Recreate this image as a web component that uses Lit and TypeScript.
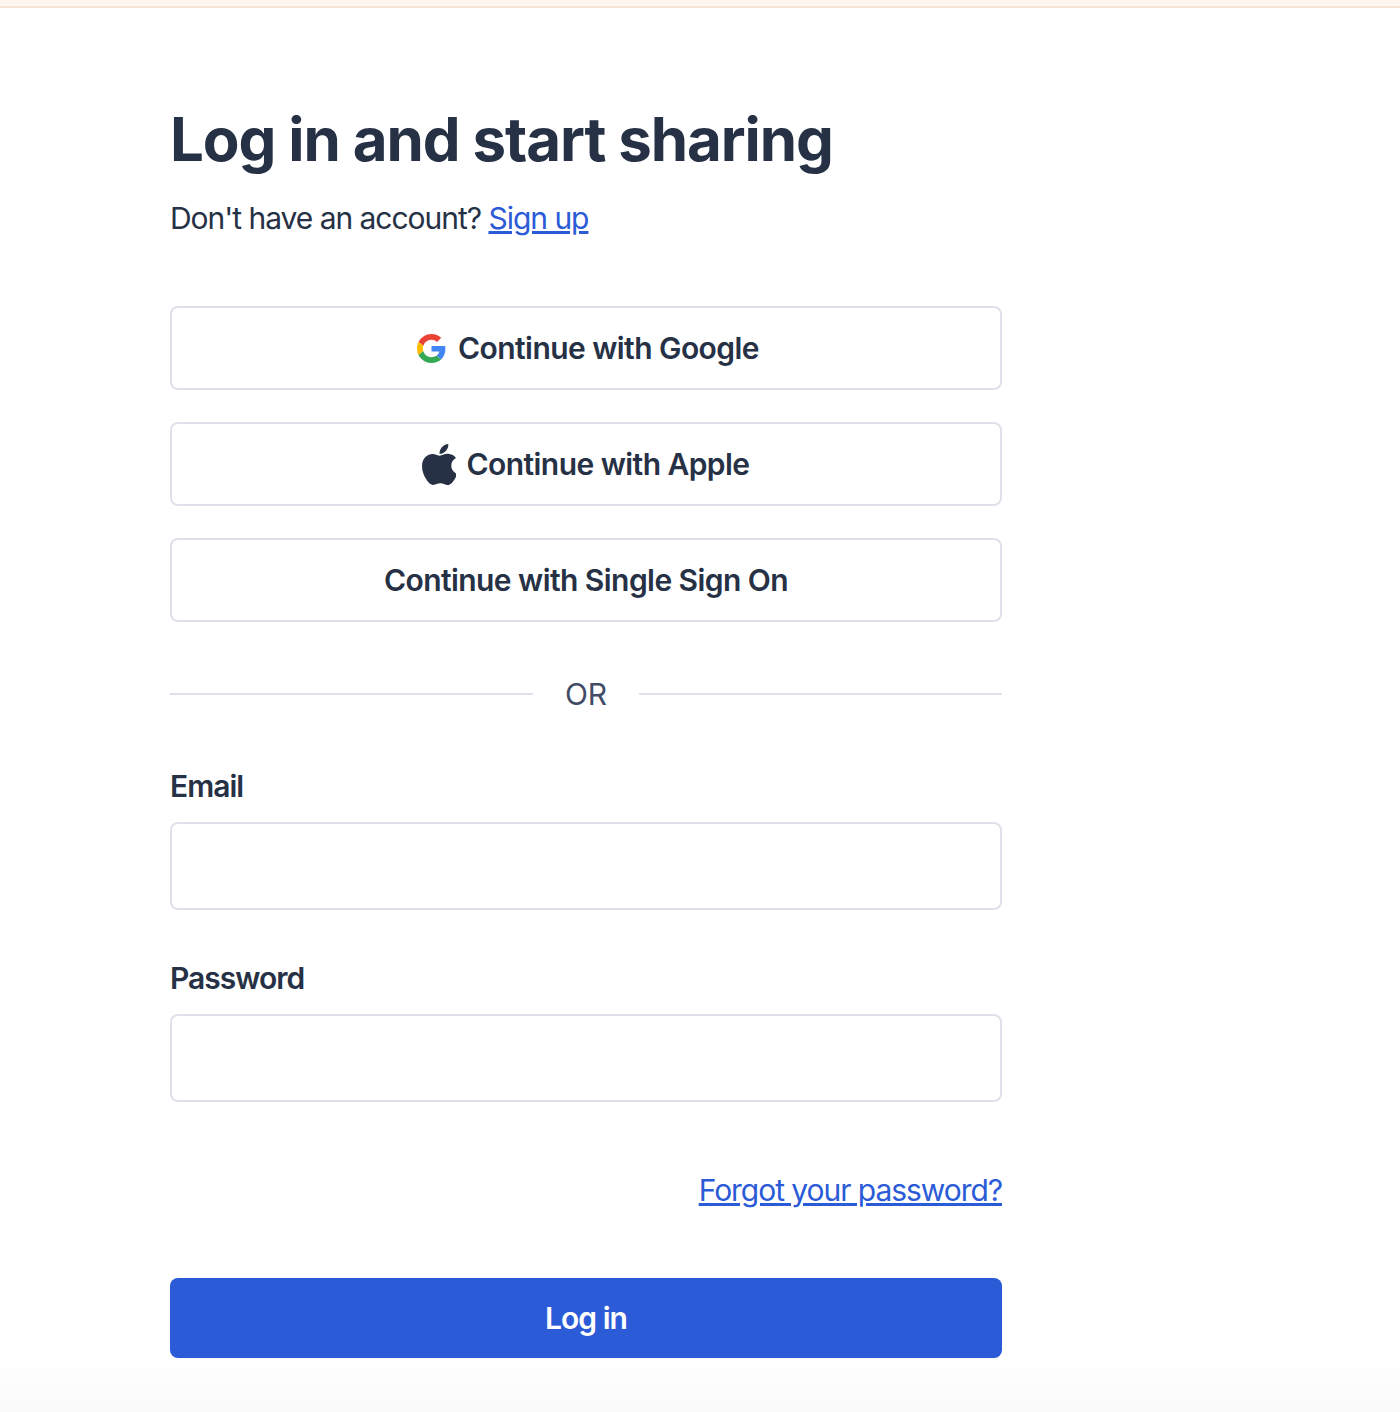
import { LitElement, html, css } from 'lit';
import { customElement } from 'lit/decorators.js';

@customElement('app-root')
export class AppRoot extends LitElement {
  render() {
    return html`
      <div class="top-bar"></div>
      <main class="form">
        <h1 class="title">Log in and start sharing</h1>
        <p class="subtitle">Don't have an account? <a href="#">Sign up</a></p>
        <div class="providers">
          <button class="provider provider--google">
            <svg width="29" height="29" viewBox="0 0 48 48">
              <path fill="#EA4335" d="M24 9.5c3.5 0 6.7 1.2 9.2 3.6l6.9-6.9C35.900 2.400 30.500 0 24 0 14.600 0 6.500 5.400 2.600 13.200l8 6.200C12.400 13.700 17.700 9.500 24 9.500z"/>
              <path fill="#4285F4" d="M47 24.500c0-1.600-.1-3.100-.4-4.500H24v9h12.900c-.6 3-2.200 5.500-4.700 7.200l7.700 6c4.500-4.200 7.100-10.300 7.100-17.700z"/>
              <path fill="#FBBC05" d="M10.500 28.600c-.5-1.400-.8-3-.8-4.600s.3-3.200.8-4.600l-8-6.200C.9 16.500 0 20.100 0 24s.9 7.500 2.600 10.800l7.900-6.200z"/>
              <path fill="#34A853" d="M24 48c6.500 0 11.900-2.100 15.900-5.800l-7.700-6c-2.200 1.500-4.900 2.300-8.200 2.300-6.300 0-11.600-4.200-13.500-9.900l-8 6.200C6.500 42.600 14.600 48 24 48z"/>
            </svg>
            Continue with Google
          </button>
          <button class="provider provider--apple">
            <svg width="34" height="41" viewBox="4 32 365 448" preserveAspectRatio="none">
              <path fill="#263145" d="M318.700 268.700c-.2-36.700 16.400-64.400 50-84.800-18.800-26.900-47.200-41.700-84.700-44.600-35.500-2.800-74.300 20.700-88.500 20.700-15 0-49.400-19.700-76.400-19.700C63.300 141.200 4 184.800 4 273.500q0 39.300 14.400 81.200c12.800 36.700 59 126.700 107.200 125.200 25.200-.6 43-17.900 75.800-17.900 31.800 0 48.300 17.900 76.400 17.900 48.600-.7 90.400-82.500 102.600-119.300-65.200-30.700-61.700-90-61.700-91.900zm-56.600-164.200c27.300-32.400 24.800-61.900 24-72.500-24.100 1.400-52 16.400-67.900 34.900-17.500 19.800-27.800 44.300-25.600 71.900 26.100 2 49.900-11.400 69.500-34.300z"/>
            </svg>
            Continue with Apple
          </button>
          <button class="provider">Continue with Single Sign On</button>
        </div>
        <div class="divider"><span>OR</span></div>
        <label class="field">
          <span class="field__label">Email</span>
          <input class="field__input" type="email" />
        </label>
        <label class="field">
          <span class="field__label">Password</span>
          <input class="field__input" type="password" />
        </label>
        <div class="forgot"><a href="#">Forgot your password?</a></div>
        <button class="submit">Log in</button>
      </main>
    `;
  }

  static styles = [
    css`
      :host {
        display: block;
        height: 1412px;
        overflow: hidden;
        font-family: 'Inter', 'Liberation Sans', sans-serif;
        color: #263145;
        background: linear-gradient(#fff 1360px, #fafafa 1412px);
      }

      * {
        box-sizing: border-box;
      }

      .top-bar {
        height: 8px;
        background: #fff6f2;
        border-bottom: 2px solid #f7e2d7;
      }

      .form {
        display: flex;
        flex-direction: column;
        width: 832px;
        margin-left: 170px;
        padding-top: 94px;
      }

      .title {
        margin: 0;
        font-size: 60px;
        line-height: 74px;
        font-weight: 700;
        letter-spacing: -1.12px;
      }

      .subtitle {
        margin: 22px 0 0;
        font-size: 30px;
        line-height: 40px;
        letter-spacing: -1.03px;
      }

      a {
        color: #2b5bd7;
      }

      .providers {
        display: flex;
        flex-direction: column;
        gap: 32px;
        margin-top: 68px;
      }

      .provider {
        display: flex;
        align-items: center;
        justify-content: center;
        height: 84px;
        padding: 0;
        background: #fff;
        border: 2px solid #dfe1ea;
        border-radius: 8px;
        font: 600 30px 'Inter', 'Liberation Sans', sans-serif;
        letter-spacing: -0.56px;
        color: #263145;
      }

      .provider--google {
        padding-left: 4px;
      }

      .provider--google svg {
        margin-right: 12px;
      }

      .provider--apple svg {
        margin-right: 10px;
      }

      .divider {
        display: flex;
        align-items: center;
        gap: 32px;
        margin-top: 52px;
        height: 40px;
        font-size: 30px;
        color: #414b66;
      }

      .divider::before,
      .divider::after {
        content: '';
        flex: 1;
        height: 2px;
        background: #dfe1ea;
      }

      .field {
        display: flex;
        flex-direction: column;
        margin-top: 48px;
      }

      .divider + .field {
        margin-top: 52px;
      }

      .field__label {
        font-size: 30px;
        line-height: 40px;
        font-weight: 600;
        letter-spacing: -1px;
      }

      .field__input {
        height: 88px;
        margin-top: 16px;
        background: #fff;
        border: 2px solid #dfe1ea;
        border-radius: 8px;
      }

      .forgot {
        display: flex;
        justify-content: flex-end;
        margin-top: 68px;
        font-size: 30px;
        line-height: 40px;
        letter-spacing: -1.05px;
      }

      .submit {
        height: 80px;
        margin-top: 68px;
        background: #2b5bd7;
        border: 0;
        border-radius: 8px;
        color: #fff;
        font: 600 30px 'Inter', 'Liberation Sans', sans-serif;
        letter-spacing: -0.95px;
      }
    `,
  ];
}

declare global {
  interface HTMLElementTagNameMap {
    'app-root': AppRoot;
  }
}
